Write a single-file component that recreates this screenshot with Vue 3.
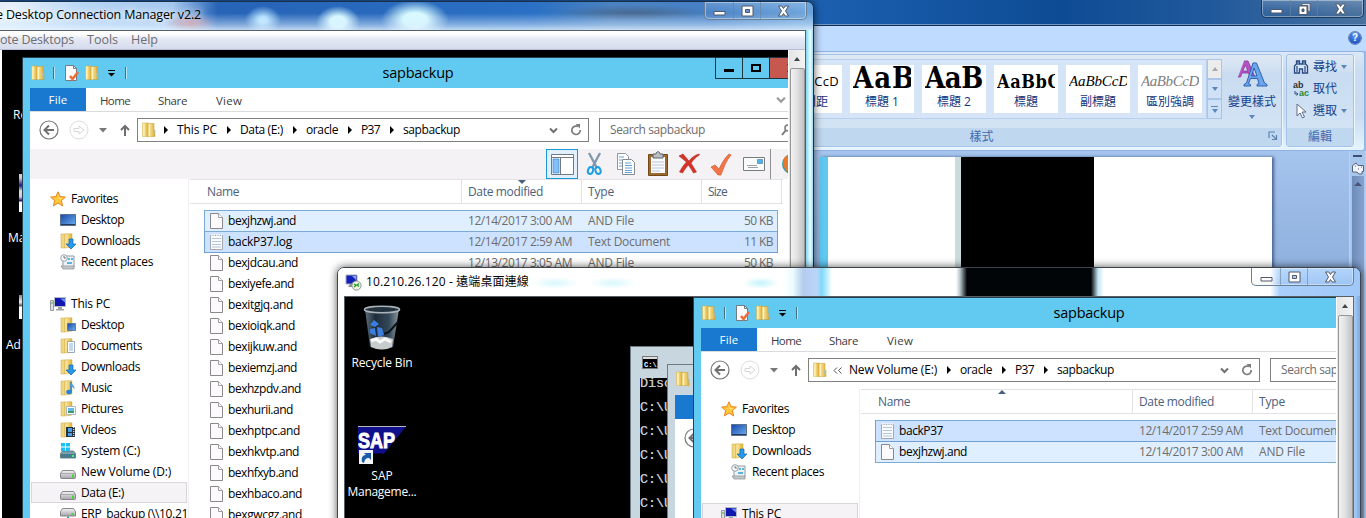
<script setup>
const vFit = {
  mounted(el, { value }) {
    if (!value) return
    const n = el.textContent.length
    el.style.letterSpacing = (value - el.getBoundingClientRect().width) / n + 'px'
  }
}

const favorites = [
  { icon: 'star', label: 'Favorites', w: 47, top: true },
  { icon: 'desktop', label: 'Desktop', w: 43 },
  { icon: 'downloads', label: 'Downloads', w: 59 },
  { icon: 'recent', label: 'Recent places', w: 72 },
  { blank: true }
]

const sessions = [
  {
    id: 'manager',
    title: 'e Desktop Connection Manager v2.2', titleW: 205,
    menu: [['ote Desktops', 74], ['Tools', 31], ['Help', 27]],
    explorer: {
      toolbar: true,
      path: [['This PC', 40], ['Data (E:)', 43], ['oracle', 32], ['P37', 19], ['sapbackup', 57]],
      tree: [
        ...favorites,
        { icon: 'pc', label: 'This PC', w: 39, top: true },
        { icon: 'f-desktop', label: 'Desktop', w: 43 },
        { icon: 'f-docs', label: 'Documents', w: 61 },
        { icon: 'downloads', label: 'Downloads', w: 59 },
        { icon: 'f-music', label: 'Music', w: 31 },
        { icon: 'f-pics', label: 'Pictures', w: 42 },
        { icon: 'f-video', label: 'Videos', w: 35 },
        { icon: 'sysdrive', label: 'System (C:)', w: 59 },
        { icon: 'drive', label: 'New Volume (D:)', w: 90 },
        { icon: 'drive', label: 'Data (E:)', w: 43, sel: true },
        { icon: 'netdrive', label: 'ERP_backup (\\\\10.21', w: 107 }
      ],
      sort: 'date',
      files: [
        { name: 'bexjhzwj.and', w: 68, date: '12/14/2017 3:00 AM', type: 'AND File', size: '50 KB', hl: 'light' },
        { name: 'backP37.log', w: 64, date: '12/14/2017 2:59 AM', type: 'Text Document', size: '11 KB', hl: 'dark', txt: true },
        { name: 'bexjdcau.and', w: 70, date: '12/13/2017 3:05 AM', type: 'AND File', size: '50 KB' },
        { name: 'bexiyefe.and', w: 66 },
        { name: 'bexitgjq.and', w: 65 },
        { name: 'bexioiqk.and', w: 67 },
        { name: 'bexijkuw.and', w: 69 },
        { name: 'bexiemzj.and', w: 69 },
        { name: 'bexhzpdv.and', w: 73 },
        { name: 'bexhurii.and', w: 65 },
        { name: 'bexhptpc.and', w: 72 },
        { name: 'bexhkvtp.and', w: 71 },
        { name: 'bexhfxyb.and', w: 70 },
        { name: 'bexhbaco.and', w: 74 },
        { name: 'bexgwcgz.and', w: 74 }
      ]
    }
  },
  {
    id: 'remote',
    title: '10.210.26.120 - 遠端桌面連線', titleW: 163,
    explorer: {
      path: [['New Volume (E:)', 88], ['oracle', 32], ['P37', 19], ['sapbackup', 57]],
      tree: [...favorites, { icon: 'pc', label: 'This PC', w: 39, top: true, sel: true }],
      sort: 'name',
      files: [
        { name: 'backP37', w: 44, date: '12/14/2017 2:59 AM', type: 'Text Document', size: '11 KB', hl: 'dark', txt: true },
        { name: 'bexjhzwj.and', w: 68, date: '12/14/2017 3:00 AM', type: 'AND File', size: '50 KB', hl: 'light' }
      ]
    }
  }
]

const tools = ['layout', 'cut', 'copy', 'paste', 'delete', 'check', 'mail']
const typeW = { 'AND File': 46, 'Text Document': 82 }
const styles = [
  { s: 'AaBbCcD', n: '無間距', k: 'plain', w: 58 },
  { s: 'AaB', n: '標題 1', k: 'h1', w: 62 },
  { s: 'AaB', n: '標題 2', k: 'h2', w: 58 },
  { s: 'AaBbC', n: '標題', k: 'h3', w: 64 },
  { s: 'AaBbCcD', n: '副標題', k: 'sub', w: 60 },
  { s: 'AaBbCcD', n: '區別強調', k: 'weak', w: 58 }
]
</script>

<template>
  <div class="screen">
    <svg class="defs" width="0" height="0">
      <defs>
        <linearGradient id="gy" x1="0" x2="1"><stop offset="0" stop-color="#fdf0b0" /><stop offset="1" stop-color="#e0ae34" /></linearGradient>
        <linearGradient id="gb" x1="0" x2="1" y2="1"><stop offset="0" stop-color="#1746a8" /><stop offset="1" stop-color="#6fb2f2" /></linearGradient>
        <linearGradient id="gd" x2="0" y2="1"><stop offset="0" stop-color="#f4f4f6" /><stop offset="1" stop-color="#a4a4aa" /></linearGradient>
        <linearGradient id="gbin" x1="0" x2="1"><stop offset="0" stop-color="#60707c" /><stop offset=".3" stop-color="#1d2c3a" /><stop offset=".7" stop-color="#34485a" /><stop offset="1" stop-color="#8b979f" /></linearGradient>
      </defs>
      <symbol id="folder" viewBox="0 0 16 16"><path d="M1.500 1h6v13.500h-6z" fill="url(#gy)" stroke="#cfa73c" stroke-width=".5" /><path d="M7 1.500h6v6l1 1v6H7z" fill="url(#gy)" stroke="#c99a30" stroke-width=".5" /><path d="M3 1.500v13M8.500 2v12.500" stroke="#fdf3bd" /><path d="M13 8v4" stroke="#8ac5e8" /></symbol>
      <symbol id="halffolder" viewBox="0 0 16 16"><path d="M1 1h4v14H1z" fill="#f1d681" stroke="#cda53a" stroke-width=".5" /><path d="M5 .8h7v13.200l-7 1z" fill="url(#gy)" stroke="#d2a944" stroke-width=".5" /></symbol>
      <symbol id="props" viewBox="0 0 16 16"><path d="M2.500.5h8l3 3v12h-11z" fill="#fdfafb" stroke="#747b82" /><path d="M10.500.5v3h3" fill="none" stroke="#747b82" /><path d="M7 11l2.500 3L15 7" fill="none" stroke="#ee6c3b" stroke-width="2.600" /></symbol>
      <symbol id="star" viewBox="0 0 16 16"><path d="M8 .8l2.100 4.800 5.300.5-4 3.500 1.200 5.300L8 12l-4.600 2.900 1.200-5.300-4-3.500 5.300-.5z" fill="#ffc83c" stroke="#e9811e" /><path d="M8 3l1 4 4 .2-4 .8z" fill="#fff0a0" /></symbol>
      <symbol id="desktop" viewBox="0 0 16 16"><path d="M.5 2.500h15v11H.5z" fill="url(#gb)" stroke="#5c6f8c" /><path d="M1 12.500h14" stroke="#243b62" /></symbol>
      <symbol id="downloads" viewBox="0 0 16 16"><use href="#halffolder" /><path d="M9 6h4v5h3l-5 5-5-5h3z" fill="#2698ec" stroke="#1668b0" stroke-width=".7" /></symbol>
      <symbol id="recent" viewBox="0 0 16 16"><path d="M5 2h9v11H3V7z" fill="#eef2f4" stroke="#929aa0" /><path d="M1 12h13v3H3z" fill="#c5c9cc" stroke="#858b90" stroke-width=".7" /><circle cx="4" cy="4" r="3.300" fill="#f5f8fa" stroke="#9aa4aa" /><path d="M4 2v2h2" fill="none" stroke="#555" stroke-width=".8" /><path d="M8 5h2M11 5h2M7 9h5" stroke="#27a0d8" stroke-width="1.500" /></symbol>
      <symbol id="pc" viewBox="0 0 16 16"><path d="M4.500 1.500h11v9h-11z" fill="#1018b0" stroke="#b8bcc4" /><path d="M10 2.500h5v4z" fill="#6a88f0" /><path d="M8 11h4v2h2v1.500H6V13h2z" fill="#9ea4aa" /><path d="M.5 4.500h3v10h-3z" fill="#dcdfe2" stroke="#80868c" stroke-width=".8" /><path d="M2 6v2" stroke="#36b336" /></symbol>
      <symbol id="f-desktop" viewBox="0 0 16 16"><use href="#halffolder" /><path d="M7.500 6.500h8v7h-8z" fill="url(#gb)" stroke="#506a8c" stroke-width=".8" /></symbol>
      <symbol id="f-docs" viewBox="0 0 16 16"><use href="#halffolder" /><path d="M7.500 3.500h7v11h-7z" fill="#fff" stroke="#8796a5" stroke-width=".8" /><path d="M9 6h4M9 8h4M9 10h4M9 12h4" stroke="#6ba0cf" stroke-width=".8" /></symbol>
      <symbol id="f-music" viewBox="0 0 16 16"><use href="#halffolder" /><path d="M11 2v10" stroke="#2384d8" stroke-width="1.500" /><path d="M11 2c0 3 5 3 3 8 0-2-1-3-3-4z" fill="#3da0ee" /><ellipse cx="9" cy="12" rx="2.800" ry="2.200" fill="#2384d8" /></symbol>
      <symbol id="f-pics" viewBox="0 0 16 16"><use href="#halffolder" /><path d="M6.500 5.500h9v8h-9z" fill="#fff" stroke="#98a8b4" stroke-width=".8" /><path d="M8 7h6v3H8z" fill="#69b8e8" /><path d="M8 10h6v2H8z" fill="#3b9a65" /></symbol>
      <symbol id="f-video" viewBox="0 0 16 16"><use href="#halffolder" /><path d="M6 5h9v10H6z" fill="#26313c" /><path d="M8 6h4v4H8zM8 11h4v3H8z" fill="#4c9de0" /><path d="M13.700 5v10" stroke="#e8eef2" stroke-width="1.200" stroke-dasharray="1 1" /></symbol>
      <symbol id="drive" viewBox="0 0 16 16"><path d="M2.500 6.500h11l2 3v4q0 1-1 1h-13q-1 0-1-1v-4z" fill="url(#gd)" stroke="#7c7c82" stroke-width=".9" /><path d="M1 9.500h14" stroke="#9a9aa0" stroke-width=".7" /><path d="M12 10.500h2v3h-2z" fill="#3eda2e" /></symbol>
      <symbol id="sysdrive" viewBox="0 0 16 16"><path d="M2.500 8h11l2 2.500V15H.5v-4.500z" fill="#7ba0ad" stroke="#5d6b74" stroke-width=".8" /><path d="M1 11h14v4H1z" fill="#477c90" /><path d="M12 12h2v2h-2z" fill="#4f5" /><path d="M1 0h4v3.500H1zM6 0h4v3.500H6zM1 4.500h4V8H1zM6 4.500h4V8H6z" fill="#19c1f5" /></symbol>
      <symbol id="netdrive" viewBox="0 0 16 16"><path d="M2.500 2.500h11l2 3V10H.5V5.500z" fill="url(#gd)" stroke="#7c7c82" stroke-width=".9" /><path d="M11.500 7h2v2h-2z" fill="#3eda2e" /><path d="M7 10.500h2V14h5v2H2v-2h5z" fill="#20a878" /></symbol>
      <symbol id="file" viewBox="0 0 13 16"><path d="M.5.5h8l4 4v11H.5z" fill="#fcfafc" stroke="#8a888a" /><path d="M8.500.5v4h4" fill="#fff" stroke="#a09ea0" /></symbol>
      <symbol id="text" viewBox="0 0 13 16"><path d="M.5 1.500h12v14H.5z" fill="#f8fafc" stroke="#a3a9b0" /><path d="M2 4.500h9M2 7.500h9M2 10.500h9M2 13h9" stroke="#b4c6da" /><path d="M1 1h11" stroke="#fff" stroke-width="1.600" stroke-dasharray="1.500 1" /></symbol>
      <symbol id="back" viewBox="0 0 20 20"><circle cx="10" cy="10" r="9" fill="#fff" stroke="#767676" stroke-width="1.200" /><path d="M15 10H6M10 5.500L5.500 10l4.500 4.500" fill="none" stroke="#707070" stroke-width="2" /></symbol>
      <symbol id="fwd" viewBox="0 0 20 20"><circle cx="10" cy="10" r="9" fill="#fff" stroke="#dcdcdc" /><path d="M5 8.500h5V6l5 4-5 4v-2.500H5z" fill="none" stroke="#d6d6d6" /></symbol>
      <symbol id="up" viewBox="0 0 10 13"><path d="M5 12V2M1 6l4-4 4 4" fill="none" stroke="#6e6e6e" stroke-width="2" /></symbol>
      <symbol id="chev" viewBox="0 0 9 7"><path d="M1 1.500L4.500 5 8 1.500" fill="none" stroke="currentColor" stroke-width="2" /></symbol>
      <symbol id="reload" viewBox="0 0 12 12"><path d="M8 2.600A4.200 4.200 0 1 0 10.200 6" fill="none" stroke="#7c7c7c" stroke-width="1.700" /><path d="M5.500 0H10v4.500z" fill="#7c7c7c" /></symbol>
      <symbol id="layout" viewBox="0 0 32 30"><path d="M5.500 5.500h22v20h-22z" fill="#fff" stroke="#75797f" /><path d="M6 8.500h21M14.500 9v16" stroke="#75797f" /><path d="M7 10h6v14H7z" fill="#83c0fa" stroke="#3686cf" stroke-width=".7" /></symbol>
      <symbol id="cut" viewBox="0 0 32 30"><path d="M11 4l8 15M22 4l-8 15" stroke="#8299ad" stroke-width="2.400" /><ellipse cx="12.500" cy="21.500" rx="2.500" ry="3.500" fill="none" stroke="#1e9fe5" stroke-width="2" transform="rotate(20 12.500 21.500)" /><ellipse cx="20" cy="21.500" rx="2.500" ry="3.500" fill="none" stroke="#1e9fe5" stroke-width="2" transform="rotate(-20 20 21.500)" /></symbol>
      <symbol id="copy" viewBox="0 0 32 30"><path d="M7.500 4.500h8l3 3v13h-11z" fill="#fff" stroke="#92979c" /><path d="M12.500 10.500h9l3 3v12h-12z" fill="#fff" stroke="#858b90" /><path d="M15 14h6M15 16.500h7M15 19h7M15 21.500h7M15 23.500h7M9 8h5M9 11h3M9 14h3M9 17h3" stroke="#63a0dc" /></symbol>
      <symbol id="paste" viewBox="0 0 32 30"><path d="M6.500 5.500h19v21h-19z" fill="#9c6a2c" stroke="#714918" /><path d="M9 8h14v16H9z" fill="#fbfbfd" /><path d="M10 13h12M10 16h12M10 19h12M10 22h8" stroke="#b6c6dc" /><path d="M11 5h3c0-3 4-3 4 0h3v4H11z" fill="#b9bec3" stroke="#5e6469" /></symbol>
      <symbol id="delete" viewBox="0 0 32 30"><path d="M5 7l4-2 6 7c3-4 6-6 10-7l.5 1c-4 2-6 5-8.500 8l5.500 9-3 1-5-8c-3 3-4 5-6 8l-3-1c2-4 4-7 7-10z" fill="#d63426" stroke="#a81c14" stroke-width=".5" /></symbol>
      <symbol id="check" viewBox="0 0 32 30"><path d="M5 18l4-2 4 4c3-6 5-10 10-15l2 1c-5 6-7 12-10 20h-3z" fill="#f0764a" stroke="#d85a2e" stroke-width=".7" /></symbol>
      <symbol id="mail" viewBox="0 0 32 30"><path d="M5.500 8.500h21v13h-21z" fill="#fafbfb" stroke="#777c80" /><path d="M19.500 10.500h5v4h-5z" fill="#48b7e8" stroke="#238" stroke-width=".4" /><path d="M9 16.500h10M10 18.500h10" stroke="#98a0a6" /></symbol>
      <symbol id="wmin" viewBox="0 0 13 12"><path d="M1 6.500h11v3.500H1z" fill="#fff" stroke="#535768" /></symbol>
      <symbol id="wmax" viewBox="0 0 13 12"><path d="M1 1h11v10H1zM4.500 4.500v3h4v-3z" fill="#fff" fill-rule="evenodd" stroke="#535768" /></symbol>
      <symbol id="wres" viewBox="0 0 13 12"><path d="M4 .7h8v7.500h-2V2.500H4z" fill="#fff" stroke="#535768" stroke-width=".8" /><path d="M1 3h8v8.500H1zM4 6v2.500h2V6z" fill="#fff" fill-rule="evenodd" stroke="#535768" /></symbol>
      <symbol id="wx" viewBox="0 0 13 12"><path d="M1.500 1h3.300L6.500 3.500 8.200 1h3.300L8.500 6l3 5H8.200L6.500 8.500 4.800 11H1.500l3-5z" fill="#fff" stroke="#535768" /></symbol>
    </svg>

    <!-- word processor behind everything -->
    <section class="word">
      <div class="word-title">
        <div class="controls dark">
          <i><svg><use href="#wmin" /></svg></i><i><svg><use href="#wres" /></svg></i><i><svg><use href="#wx" /></svg></i>
        </div>
      </div>
      <div class="word-tabs"><span class="help">?</span></div>
      <div class="ribbon">
        <div class="group gstyle">
          <div class="gbody">
            <div class="gallery">
              <div v-for="t in styles" :key="t.n" class="tile">
                <div class="sample" :class="t.k"><span v-fit="t.w">{{ t.s }}</span></div>
                <div class="tname">{{ t.n }}</div>
              </div>
            </div>
            <div class="gscroll"><i class="off"><b class="tri up"></b></i><i><b class="tri"></b></i><i><u></u><b class="tri"></b></i></div>
            <div class="change">
              <svg width="32" height="30" viewBox="0 0 32 30">
                <path d="M8 2h4l7 16h-5l-1.500-4H6l-1.500 4H2M6.800 12h5L9.500 6z" fill="#b552c4" stroke="#87389a" stroke-width=".8" fill-rule="evenodd" />
                <path d="M17 4h3.500l8 20 2.500 1.500V27H21v-1.500l2-1-1.500-5h-7l-2 5 2 1V27H8v-1.500l2.500-1.500zM15.500 17H21l-3-8z" fill="#6ea4ea" stroke="#2d62b4" fill-rule="evenodd" />
              </svg>
              <span>變更樣式</span><b class="tri"></b>
            </div>
          </div>
          <div class="glabel">樣式
            <svg class="launch" width="10" height="10"><path d="M1 7V1h6M4 4l4 4M8.500 4v4.500H4" fill="none" stroke="#5d83b4" stroke-width="1.200" /></svg>
          </div>
        </div>
        <div class="group gedit">
          <div class="gbody col">
            <div class="cmd"><svg width="16" height="16"><path d="M1.500 7l2-2V2h3v3h3V2h3v3l2 2v7h-5v-4h-3v4h-5z" fill="#d8e6fa" stroke="#274a82" stroke-width="1.300" /><path d="M4 7v6M12 7v6M5 3v3M11 3v3" stroke="#274a82" stroke-width="1.200" /></svg><span>尋找</span><b class="tri"></b></div>
            <div class="cmd"><div class="repl"><span>ab</span><em>ac</em><svg width="5" height="6"><path d="M1 0v3h3M2.500 1.500L4 3 2.500 4.500" fill="none" stroke="#29508c" /></svg></div><span>取代</span></div>
            <div class="cmd"><svg width="16" height="16"><path d="M4 1v12l3-3 2.500 5 2-1L9 9h4z" fill="#fff" stroke="#5b6e8c" /></svg><span>選取</span><b class="tri"></b></div>
          </div>
          <div class="glabel">編輯</div>
        </div>
      </div>
      <div class="doc">
        <div class="paper"><i class="p-cyan"></i><i class="p-white"></i><i class="p-gray"></i><i class="p-black"></i><i class="p-rest"></i></div>
        <div class="vbar">
          <i class="split"></i>
          <svg width="14" height="14"><path d="M1.500 4.500L5 2l2 2.500h5.500v6H11v2.500H8l-2-2H1.500z" fill="#f0f3fa" stroke="#56657c" /><path d="M4 5h1M7 8h1M10 6h1" stroke="#56657c" /></svg>
          <div class="vtrack"><b class="tri up"></b></div>
        </div>
      </div>
    </section>

    <!-- the two remote sessions -->
    <section v-for="s in sessions" :key="s.id" class="win" :class="s.id">
      <header class="wtitle">
        <svg v-if="s.id === 'remote'" class="rdp" width="17" height="17"><path d="M1 1h11v9H1z" fill="#1020b8" stroke="#aab" /><path d="M7 2h4v4z" fill="#86a4ff" /><path d="M5 10h4l1 3H3z" fill="#8a9098" /><circle cx="11.500" cy="11.500" r="4.600" fill="#eaf3e4" stroke="#8c968c" /><path d="M9 10l2 1.500L9 13M14 9.500L12 11l2 1.500" fill="none" stroke="#299b20" stroke-width="1.300" /></svg>
        <span v-fit="s.titleW">{{ s.title }}</span>
        <div class="controls">
          <i><svg><use href="#wmin" /></svg></i><i><svg><use href="#wmax" /></svg></i><i><svg><use href="#wx" /></svg></i>
        </div>
      </header>
      <div class="client">
        <nav v-if="s.menu" class="menubar"><span v-for="m in s.menu" :key="m[0]" v-fit="m[1]">{{ m[0] }}</span></nav>
        <div class="view">
          <div class="desk">
            <template v-if="s.id === 'manager'">
              <span class="dlabel d1">Re</span><span class="dlabel d2">Ma</span><span class="dlabel d3">Ad</span>
              <i class="frag f1"></i><i class="frag f2"></i>
            </template>
            <template v-else>
              <div class="dicon bin">
                <svg width="40" height="46" viewBox="0 0 40 46">
                  <path d="M3 4l5 38q12 5 23 0l6-38z" fill="url(#gbin)" />
                  <path d="M8 34q12-5 23 0l-1 8q-10 5-21 0z" fill="#c9cccd" />
                  <path d="M9 36l5-2 4 3 5-3 6 3" fill="none" stroke="#f7f8f8" stroke-width="3" />
                  <path d="M36 17l-9 10-5 2" stroke="#0b1118" stroke-width="2" fill="none" />
                  <path d="M8 20l4-5 5 4-4 3zM8 24l5-1 1 8-6-3zM15 22l5 1 2 7-6 2z" fill="#3b7ee0" />
                  <ellipse cx="20" cy="4.500" rx="17.500" ry="3.200" fill="#22313c" stroke="#a9b3b9" stroke-width="1.600" />
                </svg>
                <span v-fit="61">Recycle Bin</span>
              </div>
              <div class="dicon sap">
                <svg width="48" height="39" viewBox="0 0 48 39">
                  <path d="M0 .5h48L26 27.500H0z" fill="#10108c" /><path d="M0 .5h48" stroke="#b8b8b8" />
                  <text x="0" y="22" font-family="Liberation Sans" font-weight="bold" font-size="22" textLength="37" lengthAdjust="spacingAndGlyphs" fill="#fff" stroke="#fff">SAP</text>
                  <path d="M1 24h14v14H1z" fill="#f2f4f6" /><path d="M4 36c-1-5 1-7 4-7l-2-2h7v7l-2-2c-3 0-4 1-5 5z" fill="#1d5ca8" />
                </svg>
                <span>SAP</span><span v-fit="69">Manageme...</span>
              </div>
              <div class="cmdwin">
                <svg width="16" height="13"><path d="M.5.5h15v12H.5z" fill="#000" stroke="#777" /><path d="M1 2h14" stroke="#ddd" stroke-width="2" /><text x="2" y="10.500" font-family="Liberation Mono" font-weight="bold" font-size="7" fill="#fff">C:\.</text></svg>
                <div class="console"><pre>Disc
C:\U
C:\U
C:\U
C:\U
C:\U</pre></div>
              </div>
              <div class="ghost">
                <svg class="gfold" width="16" height="16"><use href="#folder" /></svg>
                <div class="gfile"></div>
                <div class="gpage"><svg width="20" height="20"><use href="#back" /></svg></div>
              </div>
            </template>

            <article class="explorer">
              <header class="etitle">
                <svg width="16" height="16"><use href="#folder" /></svg><i class="bar"></i>
                <svg width="16" height="16"><use href="#props" /></svg>
                <svg class="nf" width="16" height="16"><use href="#folder" /></svg>
                <svg class="qa" width="7" height="7"><path d="M0 .5h7" stroke="#000" /><path d="M0 3h7L3.500 6.500z" /></svg><i class="bar"></i>
                <h1><span v-fit="71">sapbackup</span></h1>
                <div class="ecap"><i><b class="mn"></b></i><i><b class="mx"></b></i><i class="cl"><svg width="10" height="10"><path d="M1 1l8 8M9 1L1 9" stroke="#000" stroke-width="2" /></svg></i></div>
              </header>
              <div class="ebody">
                <div class="tabs">
                  <span class="tab file"><span v-fit="19">File</span></span>
                  <span class="tab t-home"><span v-fit="30">Home</span></span>
                  <span class="tab t-share"><span v-fit="29">Share</span></span>
                  <span class="tab t-view"><span v-fit="26">View</span></span>
                  <svg class="collapse" width="10" height="8"><use href="#chev" /></svg>
                </div>
                <div class="navrow">
                  <svg width="20" height="20"><use href="#back" /></svg>
                  <svg class="fw" width="20" height="20"><use href="#fwd" /></svg>
                  <svg class="hist" width="8" height="5"><path d="M0 0h8L4 4.500z" fill="#777" /></svg>
                  <svg class="upb" width="10" height="13"><use href="#up" /></svg>
                  <div class="addr">
                    <svg width="16" height="16"><use href="#folder" /></svg>
                    <svg v-if="s.id === 'remote'" class="more" width="9" height="7"><path d="M4 .5L1 3.500l3 3M8.500.5l-3 3 3 3" fill="none" stroke="#555" /></svg>
                    <template v-for="(p, i) in s.explorer.path" :key="i">
                      <svg v-if="i || s.id === 'manager'" class="crumb" :class="{ first: !i }" width="4" height="8"><path d="M0 0l4 4-4 4z" /></svg>
                      <span v-fit="p[1]">{{ p[0] }}</span>
                    </template>
                    <svg class="drop" width="9" height="7"><use href="#chev" /></svg>
                    <svg class="rel" width="12" height="12"><use href="#reload" /></svg>
                  </div>
                  <div class="search"><span v-fit="95">Search sapbackup</span><svg width="11" height="12"><circle cx="7" cy="4" r="3" fill="none" stroke="#777" stroke-width="1.500" /><path d="M5 6L1 11" stroke="#777" stroke-width="2" /></svg></div>
                </div>
                <div v-if="s.explorer.toolbar" class="toolbar">
                  <i v-for="(t, i) in tools" :key="t" :class="{ on: !i }"><svg width="32" height="30"><use :href="'#' + t" /></svg></i>
                  <i class="sep"></i>
                  <svg class="globe" width="22" height="22"><circle cx="11" cy="11" r="10" fill="#34a0a4" /><path d="M3 5l5-4 2 5-3 3 2 4-3 6-4-7z" fill="#e8792c" /></svg>
                </div>
                <div class="panes">
                  <div class="tree">
                    <div v-for="(n, i) in s.explorer.tree" :key="i" class="node" :class="{ sel: n.sel, top: n.top }">
                      <template v-if="!n.blank"><svg width="16" height="16"><use :href="'#' + n.icon" /></svg><span v-fit="n.w">{{ n.label }}</span></template>
                    </div>
                  </div>
                  <div class="list">
                    <div class="cols head">
                      <div><span v-fit="32">Name</span><b v-if="s.explorer.sort === 'name'" class="sort asc"></b></div>
                      <div><span v-fit="75">Date modified</span><b v-if="s.explorer.sort === 'date'" class="sort"></b></div>
                      <div><span v-fit="26">Type</span></div>
                      <div><span v-fit="19">Size</span></div>
                    </div>
                    <div class="rows">
                      <div v-for="f in s.explorer.files" :key="f.name" class="cols row" :class="f.hl">
                        <div class="fname"><svg width="13" height="16"><use :href="f.txt ? '#text' : '#file'" /></svg><span v-fit="f.w">{{ f.name }}</span></div>
                        <template v-if="f.date">
                          <div><span v-fit="104">{{ f.date }}</span></div>
                          <div><span v-fit="typeW[f.type]">{{ f.type }}</span></div>
                          <div class="size"><span v-fit="29">{{ f.size }}</span></div>
                        </template>
                      </div>
                    </div>
                  </div>
                </div>
              </div>
            </article>
          </div>
          <div class="scroll"><b class="tri up"></b><div class="thumb"></div></div>
        </div>
      </div>
    </section>
  </div>
</template>

<style>
html, body { margin: 0; overflow: hidden; }
</style>

<style scoped>
* { box-sizing: border-box; }
.screen { position: relative; width: 1366px; height: 518px; overflow: hidden; background: #9dbce8; font: 12px/16px "Open Sans", "Noto Sans CJK TC", sans-serif; color: #000; white-space: nowrap; }
.screen span { display: inline-block; }
svg { flex: none; display: block; }
i, em { font-style: normal; display: block; }
.defs { position: absolute; }
.tri { display: block; width: 0; border: 3px solid transparent; border-top: 4px solid #5b86bd; border-bottom: 0; }
.tri.up { border-top: 0; border-bottom: 4px solid #444; }

/* word processor */
.word { position: absolute; inset: 0; display: flex; flex-direction: column; }
.word-title { height: 26px; flex: none; background: linear-gradient(90deg, #1d61b2 800px, #0d4b94 1060px, #225a9c 1220px, #49729f 1366px); border-bottom: 1px solid #142c4c; box-shadow: inset 0 -1px #6d9acb; display: flex; justify-content: flex-end; padding-right: 2px; }
.word-tabs { height: 25px; flex: none; background: #bfdbff; padding: 5px 4px 0 0; display: flex; justify-content: flex-end; }
.help { width: 14px; height: 14px; border-radius: 50%; background: radial-gradient(circle at 50% 30%, #5e9bf5, #0c38b0); border: 1px solid #dcebff; outline: 1px solid #5c7fb5; outline-offset: -1px; color: #fff; font: bold 10px/12px "Liberation Sans", sans-serif; text-align: center; }
.ribbon { height: 100px; flex: none; width: 1365px; border: 1px solid #8db2e3; border-radius: 3px; background: linear-gradient(#dbe8f6, #c9dcf1 20%, #c9dcf1 65%, #e5f4fd); display: flex; padding: 2px 0 3px; gap: 4px; }
.group { border: 1px solid #a5c3e6; border-radius: 3px; display: flex; flex-direction: column; background: linear-gradient(#dfe9f5, #cfdff1 18%, #c8dbf0 20%, #d6e6f6); box-shadow: 1px 1px #eef6fe; }
.gstyle { width: 1281px; align-items: stretch; }
.gedit { width: 68px; }
.gbody { flex: 1; display: flex; justify-content: flex-end; padding-top: 4px; }
.glabel { height: 18px; background: #c0d7f0; color: #3f6bae; text-align: center; font-size: 12px; line-height: 17px; position: relative; }
.gstyle .glabel { padding-left: 680px; }
.launch { position: absolute; right: 3px; top: 3px; }
.gallery { display: flex; gap: 8px; padding: 5px 4px; height: 60px; background: #d5e4f6; border: 1px solid #b6cfeb; }
.tile { width: 64px; height: 48px; background: #fff; overflow: hidden; display: flex; flex-direction: column; align-items: center; }
.sample { width: 58px; height: 29px; overflow: hidden; }
.sample span { line-height: 32px; font-family: "Liberation Serif", serif; }
.plain span { font-family: "Open Sans", sans-serif; font-size: 13px; }
.h1 span, .h2 span { font: bold 29px/27px "DejaVu Serif Condensed", "DejaVu Serif", serif; }
.h3 span { font: bold 18px/33px "DejaVu Serif Condensed", "DejaVu Serif", serif; }
.sub span, .weak span { font: italic 15px/33px "Liberation Serif", serif; }
.weak { color: #808080; }
.tname { color: #15367c; font-size: 12px; line-height: 22px; }
.gscroll { width: 15px; height: 60px; display: flex; flex-direction: column; margin-right: 1px; }
.gscroll i { flex: 1; border: 1px solid #a9c6e8; background: #cfe1f7; display: flex; flex-direction: column; align-items: center; justify-content: center; gap: 2px; }
.gscroll .off { background: #ececec; }
.gscroll .off .tri { border-bottom-color: #a8a8a8; }
.gscroll u { width: 7px; height: 1px; background: #5b86bd; }
.change { width: 58px; display: flex; flex-direction: column; align-items: center; color: #15428b; }
.change span { line-height: 18px; margin-top: 4px; }
.change .tri { margin-top: 4px; }
.gbody.col { flex-direction: column; justify-content: flex-start; padding: 1px 5px 0 6px; }
.cmd { height: 22px; display: flex; align-items: center; gap: 4px; color: #15428b; }
.cmd .tri { margin-left: 0; }
.repl { width: 16px; height: 16px; position: relative; font: bold 9px/8px "Liberation Sans", sans-serif; color: #333; }
.repl span { position: absolute; left: 0; top: 0; }
.repl em { position: absolute; left: 6px; top: 8px; color: #25883a; }
.repl svg { position: absolute; left: 1px; top: 10px; }
.doc { flex: 1; padding: 6px 0 0 820px; display: flex; justify-content: space-between; background: linear-gradient(#a5c4ee, #8fb0dd 120px, #7897c4); }
.paper { width: 452px; display: flex; box-shadow: 2px 0 3px #48648e; }
.paper i { height: 400px; }
.p-cyan { width: 8px; background: #5fc8f0; }
.p-white { width: 127px; background: #fff; }
.p-gray { width: 6px; background: #cbdcdf; }
.p-black { width: 133px; background: #000; }
.p-rest { flex: 1; background: #fff; }
.vbar { width: 17px; margin-top: -6px; border-left: 1px solid #b9d3f5; display: flex; flex-direction: column; align-items: center; padding-top: 4px; border-right: 1px solid #b5cdee; background: #a8c5ec; }
.split { width: 9px; height: 2px; background: #3d4f72; margin-bottom: 4px; }
.vtrack { margin-top: 1px; flex: 1; width: 12px; background: linear-gradient(90deg, #6e8cba, #86a3cf); padding: 6px 2px 0; }
.vtrack .tri { border-width: 0 4px 4px; border-bottom-color: #4a5578; }

/* glass windows */
.controls { margin-left: auto; display: flex; height: 18px; width: 103px; border: 1px solid #6a8098; border-top: 0; border-radius: 0 0 5px 5px; background: linear-gradient(#ffffff30, #ffffff10 50%, #00000008); box-shadow: inset 0 0 0 1px #ffffff60; }
.controls i { width: 27px; display: flex; align-items: center; justify-content: center; border-right: 1px solid #6a809890; }
.controls i:first-child { width: 29px; }
.controls i:last-child { flex: 1; border: 0; }
.controls svg { width: 13px; height: 12px; }
.controls.dark { border-color: #1b3a60; }
.win { position: absolute; display: flex; flex-direction: column; border: 1px solid #1c2f47; border-radius: 7px 7px 0 0; box-shadow: 0 0 9px #000a; overflow: hidden; }
.wtitle { flex: none; display: flex; align-items: flex-start; height: 28px; }
.client { flex: 1; min-height: 0; display: flex; flex-direction: column; border: 1px solid #565e66; border-bottom: 0; background: #fff; }
.view { flex: 1; min-height: 0; display: flex; }
.desk { position: relative; flex: 1; overflow: hidden; background: #000; }
.scroll { width: 16px; margin-left: 1px; background: linear-gradient(90deg, #e5e5e5, #f3f3f3); display: flex; flex-direction: column; align-items: center; padding-top: 7px; }
.thumb { margin-top: 7px; width: 15px; flex: 1; border: 1px solid #979797; border-radius: 2px; background: linear-gradient(90deg, #f2f2f2, #e2e2e4 45%, #c2c2c6); }
.menubar { flex: none; height: 19px; display: flex; align-items: center; gap: 13px; background: linear-gradient(#fff 15%, #e6eaf5 40%, #d4daed); box-shadow: inset 0 -1px #b8bfd3; color: #6e6e70; font-size: 12.5px; padding: 0 0 2px 7px; }

.manager { left: -8px; top: 1px; width: 822px; height: 540px; padding-right: 7px; background: linear-gradient(90deg, #80d8f0, #e8fbff 60%, #9cdcf2) right 0 top 28px / 7px 100% no-repeat, #2f73c0; }
.manager .wtitle { margin-right: -7px; padding-right: 6px; background:
  linear-gradient(#fff0 40%, #d8ecff80 80%, #e6f4ffcc),
  radial-gradient(ellipse 18px 14px at 270px 18px, #b4e4ff 20%, #b7e4ff00),
  radial-gradient(ellipse 22px 16px at 345px 20px, #d8fbff 35%, #b7e4ff00),
  radial-gradient(ellipse 34px 20px at 422px 18px, #d8fbff 35%, #b7e4ff00),
  radial-gradient(ellipse 26px 10px at 197px 22px, #c4727c, #b7e4ff00),
  radial-gradient(ellipse 80px 8px at 640px 11px, #47698f, #47698f00),
  linear-gradient(90deg, #e6f0fc 20px, #b8d6f5 90px, #a4c8ef 180px, #2763b6 225px, #2a70c4 540px, #4c82c0 620px, #4580c6 720px, #6ba4dc 815px); }
.manager .wtitle > span { font-size: 12.5px; margin: 5px 0 0 3px; text-shadow: 0 0 6px #fff, 0 0 8px #fff; }
.manager .client { border-left: 0; }
.manager .desk { margin-left: 9px; }
.remote { left: 337px; top: 267px; width: 1024px; height: 270px; padding: 0 6px 0 6px; background: linear-gradient(90deg, #fff 1010px, #a9cdf5 1016px, #7eaadf); border-color: #3d4349; }
.remote .wtitle { margin: 0 -6px; padding: 0 6px; background:
  radial-gradient(ellipse 24px 6px at 217px 15px, #d8f7fd, #fff0),
  radial-gradient(ellipse 24px 6px at 275px 15px, #d8f7fd, #fff0),
  radial-gradient(ellipse 18px 6px at 423px 15px, #c4f4fb, #fff0),
  linear-gradient(90deg, #fff 445px, #ecfcff 455px, #b5ccee 465px, #b8d6fa 479px, #7ed9fb 484px, #b0e9fc 488px, #fff 494px, #fff 618px, #b8c6cc 622px, #020508 629px, #020508 753px, #c4e5f5 760px, #fff 766px, #fff 932px, #a9cffb 942px, #9fc8f8); }
.remote .wtitle > span { font-size: 12px; margin: 6px 0 0 4px; }
.remote .rdp { margin: 6px 0 0 1px; }
.remote .client { border-right-color: #4c6f9a; }

/* remote desktops */
.dlabel { position: absolute; color: #fff; }
.d1 { left: 11px; top: 57px; } .d2 { left: 6px; top: 180px; } .d3 { left: 4px; top: 287px; }
.frag { position: absolute; left: 17px; width: 4px; background: linear-gradient(#ccc 10%, #1a1a90 30%, #ddd 45%, #ccd 60%, #1a1a90 70%, #fff 75%); }
.f1 { top: 124px; height: 38px; } .f2 { top: 245px; height: 24px; background: linear-gradient(#888, #eee 30%, #555 45%, #fff 50%); }
.dicon { position: absolute; display: flex; flex-direction: column; align-items: center; width: 80px; color: #fff; }
.bin { left: -3px; top: 8px; } .bin span { margin-top: 4px; }
.sap { left: -3px; top: 129px; } .sap span:first-of-type { margin-top: 3px; } .sap span + span { margin-top: 0; }
.cmdwin { position: absolute; left: 285px; top: 49px; width: 200px; height: 240px; border: 1px solid #6e7c84; background: #c8d7df; padding: 9px 0 0 9px; }
.cmdwin svg { margin-left: 2px; }
.console { margin-top: 9px; height: 200px; background: #000; overflow: hidden; }
.console pre { margin: -6px 0 0; color: #c4c4c4; font: 13.4px/24px "Liberation Mono", monospace; text-shadow: 0 0 .5px #c4c4c4; }
.ghost { position: absolute; left: 322px; top: 67px; width: 200px; height: 240px; border: 1px solid #6e7c84; background: #c8d7df; padding: 6px 0 0 7px; display: flex; flex-direction: column; }
.gfile { height: 24px; margin-top: 8px; background: #1979d0; flex: none; }
.gpage { flex: 1; background: #fff; padding: 9px; }

/* file explorer */
.explorer { position: absolute; width: 792px; height: 540px; border: 1px solid #25404e; background: #62caf0; padding: 0 7px; display: flex; flex-direction: column; }
.manager .explorer { left: 20px; top: 7px; }
.remote .explorer { left: 348px; top: 0; }
.etitle { position: relative; height: 30px; flex: none; display: flex; align-items: center; }
.etitle .bar { width: 1px; height: 12px; background: #44707f; margin: 0 9px 0 7px; box-shadow: 1px 0 #b8e6f6; }
.etitle .nf { margin: 0 8px 0 5px; }
.etitle .bar + svg { margin-left: 0; }
.etitle .qa + .bar { margin-left: 10px; }
h1 { position: absolute; left: 0; right: 0; top: 5px; margin: 0; text-align: center; font-size: 14.5px; font-weight: 400; line-height: 20px; }
.ecap { position: absolute; left: 685px; top: -1px; display: flex; height: 22px; }
.ecap i { width: 28px; border: 1px solid #1d3642; margin-right: -1px; display: flex; align-items: center; justify-content: center; }
.ecap .mn { width: 10px; height: 3px; background: #000; margin-top: 4px; }
.ecap .mx { width: 10px; height: 8px; border: 2px solid #000; }
.ecap .cl { width: 46px; background: #c75850; }
.ebody { flex: 1; background: #fff; display: flex; flex-direction: column; min-height: 0; }
.tabs { height: 24px; flex: none; display: flex; border-bottom: 1px solid #dadbdc; color: #3c3c3c; position: relative; }
.tab { line-height: 25px; font-size: 11.5px; }
.tab.file { width: 56px; height: 23px; line-height: 23px; background: #1979d0; color: #fff; text-align: center; }
.t-home { margin-left: 14px; } .t-share { margin-left: 28px; } .t-view { margin-left: 29px; }
.collapse { position: absolute; left: 746px; top: 8px; color: #999; }
.navrow { height: 37px; flex: none; display: flex; align-items: center; padding: 0 0 1px 9px; }
.fw { margin-left: 10px; } .hist { margin-left: 10px; } .upb { margin-left: 13px; margin-right: 7px; }
.addr { width: 452px; height: 24px; border: 1px solid #808080; display: flex; align-items: center; padding-left: 3px; }
.crumb { margin: 0 9px 0 10px; }
.crumb.first { margin-left: 7px; }
.more { margin: 0 7px 0 5px; }
.drop { margin-left: auto; color: #707070; }
.rel { margin: 0 6px 0 12px; }
.search { width: 197px; height: 24px; border: 1px solid #808080; margin-left: 10px; display: flex; align-items: center; padding-left: 10px; color: #6d6d6d; }
.search svg { margin-left: 76px; }
.toolbar { height: 30px; flex: none; background: #f5f2f6; display: flex; padding-left: 516px; align-items: center; }
.toolbar .on { background: #e0f0fc; box-shadow: inset 0 0 0 1px #1c97d8; }
.toolbar .sep { width: 1px; height: 30px; background: #909090; }
.globe { margin-left: 10px; }
.panes { flex: 1; display: flex; min-height: 0; }
.tree { width: 159px; border-right: 1px solid #efeff3; padding-top: 9px; overflow: hidden; flex: none; }
.node { height: 21px; margin: 0 1px; border: 1px solid transparent; display: flex; align-items: center; padding-left: 28px; gap: 5px; }
.node.top { padding-left: 18px; }
.node.sel { background: #f6f3f7; border-color: #d9d6da; }
.list { flex: 1; padding-left: 1px; }
.cols { display: grid; grid-template-columns: 272px 120px 120px 80px; }
.head { width: 593px; height: 25px; border: 1px solid #e2e2e4; border-width: 1px 0; color: #4c607a; line-height: 24px; }
.head > div { position: relative; padding-left: 6px; border-right: 1px solid #e2e2e4; height: 23px; }
.head > div:first-child { padding-left: 17px; }
.sort { position: absolute; top: 0; left: 50%; margin-left: -4px; width: 0; border: 4px solid transparent; border-top-color: #45607f; border-bottom: 0; }
.sort.asc { border: 4px solid transparent; border-top: 0; border-bottom-color: #45607f; margin-left: 1px; }
.rows { padding: 6px 0 0 14px; }
.row { grid-template-columns: 258px 120px 120px 73px; width: 574px; height: 21px; line-height: 20px; border: 1px solid transparent; border-top: 0; color: #6d6d6d; }
.row:first-child { border-top: 1px solid transparent; height: 22px; }
.row > div { padding-left: 5px; height: 20px; }
.row .fname { display: flex; align-items: center; gap: 5px; color: #000; }
.row .size { text-align: right; padding-right: 3px; }
.row.light { background: #dfefff; border-color: #7ba9d8; }
.row.dark { background: #cde2ff; border-color: #6f9fd3; }
.row:first-child.light, .row:first-child.dark { border-top-color: #7ba9d8; }
</style>
